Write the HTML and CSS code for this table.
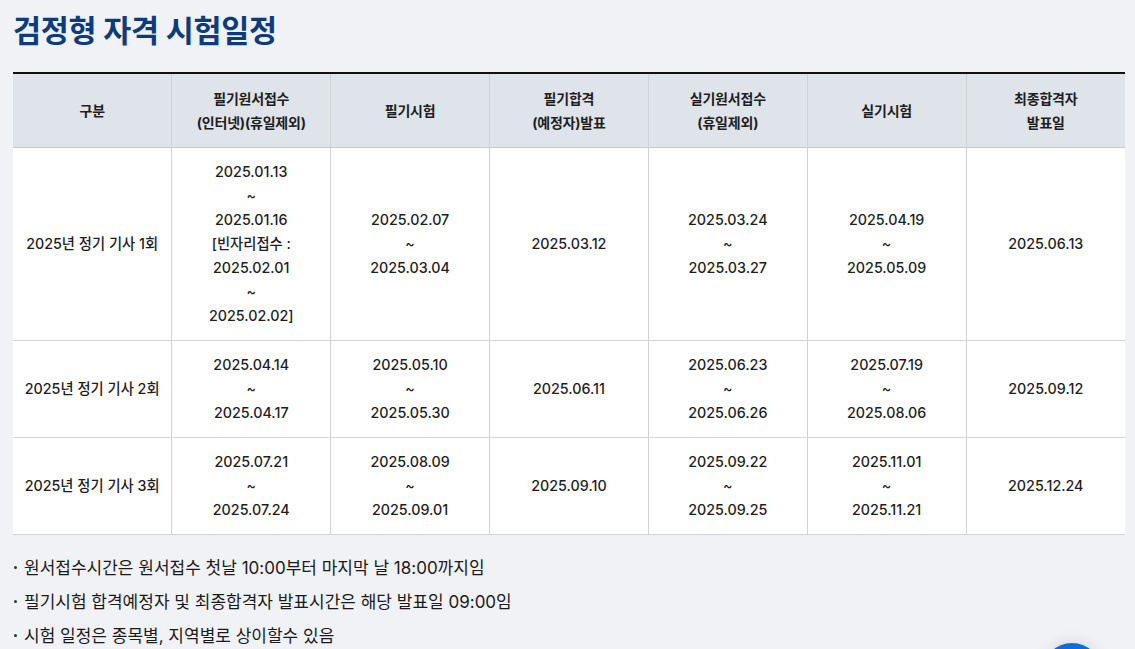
FILE: index.html
```html
<!DOCTYPE html>
<html lang="ko">
<head>
<meta charset="utf-8">
<link rel="stylesheet" href="styles.css">
</head>
<body>
<div class="page">
  <h1 class="title">검정형 자격 시험일정</h1>
  <table class="schedule">
    <thead>
      <tr>
        <th>구분</th>
        <th>필기원서접수<br>(인터넷)(휴일제외)</th>
        <th>필기시험</th>
        <th>필기합격<br>(예정자)발표</th>
        <th>실기원서접수<br>(휴일제외)</th>
        <th>실기시험</th>
        <th>최종합격자<br>발표일</th>
      </tr>
    </thead>
    <tbody>
      <tr>
        <td>2025년 정기 기사 1회</td>
        <td>2025.01.13<br>~<br>2025.01.16<br>[빈자리접수 :<br>2025.02.01<br>~<br>2025.02.02]</td>
        <td>2025.02.07<br>~<br>2025.03.04</td>
        <td>2025.03.12</td>
        <td>2025.03.24<br>~<br>2025.03.27</td>
        <td>2025.04.19<br>~<br>2025.05.09</td>
        <td>2025.06.13</td>
      </tr>
      <tr>
        <td>2025년 정기 기사 2회</td>
        <td>2025.04.14<br>~<br>2025.04.17</td>
        <td>2025.05.10<br>~<br>2025.05.30</td>
        <td>2025.06.11</td>
        <td>2025.06.23<br>~<br>2025.06.26</td>
        <td>2025.07.19<br>~<br>2025.08.06</td>
        <td>2025.09.12</td>
      </tr>
      <tr>
        <td>2025년 정기 기사 3회</td>
        <td>2025.07.21<br>~<br>2025.07.24</td>
        <td>2025.08.09<br>~<br>2025.09.01</td>
        <td>2025.09.10</td>
        <td>2025.09.22<br>~<br>2025.09.25</td>
        <td>2025.11.01<br>~<br>2025.11.21</td>
        <td>2025.12.24</td>
      </tr>
    </tbody>
  </table>
  <ul class="notes">
    <li>원서접수시간은 원서접수 첫날 10:00부터 마지막 날 18:00까지임</li>
    <li>필기시험 합격예정자 및 최종합격자 발표시간은 해당 발표일 09:00임</li>
    <li>시험 일정은 종목별, 지역별로 상이할수 있음</li>
  </ul>
</div>
<button class="fab" aria-label="top"></button>
</body>
</html>
```

FILE: styles.css
```css
html, body {
  margin: 0;
  padding: 0;
  background: #f0f2f6;
  overflow: hidden;
}
body {
  font-family: Inter, "Noto Sans CJK KR", sans-serif;
  color: #1e1e1e;
}
.page {
  padding: 0 10px 0 13px;
}
.title {
  margin: 0;
  padding-top: 11px;
  height: 72px;
  box-sizing: border-box;
  font-size: 30.5px;
  line-height: 40px;
  font-weight: 700;
  color: #0d3b7c;
  letter-spacing: -0.3px;
}
.schedule {
  width: 1112px;
  border-collapse: collapse;
  table-layout: fixed;
  border-top: 2px solid #111;
  border-bottom: 1px solid #cfd2d6;
}
.schedule th,
.schedule td {
  border-left: 1px solid #d2d2d2;
  text-align: center;
  vertical-align: middle;
  line-height: 24px;
}
.schedule th:first-child,
.schedule td:first-child {
  border-left: none;
}
.schedule th {
  background: #dfe3ea;
  font-weight: 700;
  font-size: 14px;
  letter-spacing: -0.2px;
  padding: 13px 4px 12px;
  border-bottom: 1px solid #c8ccd2;
  color: #1e1e1e;
}
.schedule td {
  background: #fff;
  padding: 12px 4px 12px;
  font-size: 14.3px;
  font-weight: 500;
  border-top: 1px solid #d6d6d6;
}
.notes {
  list-style: none;
  margin: 16px 0 0;
  padding: 0;
}
.notes li {
  position: relative;
  padding-left: 11px;
  font-size: 17px;
  line-height: 34px;
  letter-spacing: 0;
  color: #1a1a1a;
}
.notes li::before {
  content: "";
  position: absolute;
  left: 1px;
  top: 15px;
  width: 3px;
  height: 3px;
  border-radius: 50%;
  background: #333;
}
.fab {
  position: fixed;
  right: 33px;
  bottom: -54px;
  width: 60px;
  height: 60px;
  border: none;
  border-radius: 50%;
  background: #0a6fd8;
  box-shadow: 0 0 16px rgba(0, 0, 0, 0.12);
  padding: 0;
}
```
